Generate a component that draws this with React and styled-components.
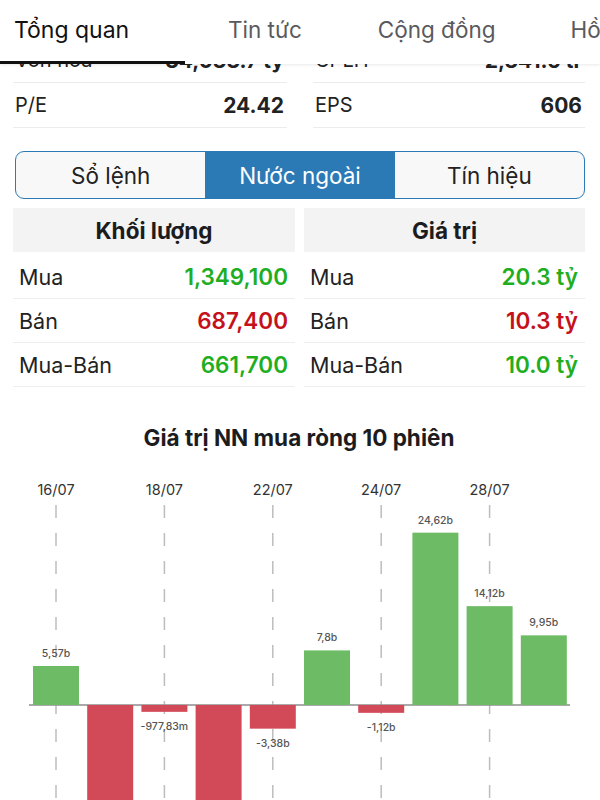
import React from "react";
import styled, { createGlobalStyle } from "styled-components";

const GlobalStyle = createGlobalStyle`
  html, body { margin: 0; padding: 0; background: #fff; overflow: hidden; }
  body { font-family: Inter, "Noto Sans", Roboto, sans-serif; color: #1c1c1e; }
  * { box-sizing: border-box; }
`;

const Page = styled.div`
  width: 600px;
  height: 800px;
  display: flex;
  flex-direction: column;
  overflow: hidden;
  background: #fff;
`;

const TabBar = styled.div`
  position: relative;
  z-index: 2;
  height: 64px;
  flex: none;
  display: flex;
  align-items: stretch;
  background: #fff;
  box-shadow: 0 1px 3px rgba(0, 0, 0, 0.09);
  white-space: nowrap;
  overflow: hidden;
`;

const Tab = styled.div`
  flex: none;
  display: flex;
  align-items: center;
  padding-bottom: 2px;
  margin-left: ${(p) => p.$offset || 0}px;
  width: ${(p) => (p.$width ? `${p.$width}px` : "auto")};
  padding-left: ${(p) => p.$pad || 0}px;
  font-size: ${(p) => (p.$active ? 23 : 22.5)}px;
  color: ${(p) => (p.$active ? "#111" : "#5a5a5e")};
  border-bottom: ${(p) => (p.$active ? "3px solid #111" : "3px solid transparent")};
`;

const Body = styled.div`
  flex: 1;
  overflow: hidden;
  padding: 0 15px 0 13px;
  display: flex;
  flex-direction: column;
  & > * { flex: none; }
`;

const InfoGrid = styled.div`
  display: grid;
  grid-template-columns: 274px 272px;
  column-gap: 26px;
  margin-top: ${(p) => p.$top || 0}px;
`;

const InfoRow = styled.div`
  height: 45px;
  display: flex;
  align-items: center;
  justify-content: space-between;
  border-bottom: 1px solid #ececec;
  padding: 0 3px 0 2px;
`;

const InfoLabel = styled.span`
  font-size: 20px;
  color: #222;
`;

const InfoValue = styled.span`
  font-size: 21px;
  font-weight: 700;
  color: #222;
`;

const Segmented = styled.div`
  margin: 23px 0 0 2px;
  height: 48px;
  display: grid;
  grid-template-columns: 1fr 1fr 1fr;
  border: 1.5px solid #2b7ab6;
  border-radius: 9px;
  overflow: hidden;
  background: #f8f8f9;
`;

const Segment = styled.div`
  display: flex;
  align-items: center;
  justify-content: center;
  font-size: 22.5px;
  color: ${(p) => (p.$active ? "#fff" : "#222")};
  background: ${(p) => (p.$active ? "#2b7ab6" : "transparent")};
`;

const Tables = styled.div`
  margin-top: 9px;
  display: grid;
  grid-template-columns: 282px 281px;
  column-gap: 9px;
`;

const Table = styled.div`
  display: flex;
  flex-direction: column;
`;

const TableHead = styled.div`
  height: 44px;
  margin-bottom: 3px;
  background: #f3f3f3;
  display: flex;
  align-items: center;
  justify-content: center;
  font-size: 22.5px;
  font-weight: 700;
  color: #1c1c1e;
`;

const TableRow = styled.div`
  height: 44px;
  display: flex;
  align-items: center;
  justify-content: space-between;
  border-bottom: 1px solid #eeeeee;
  padding: 0 7px 0 6px;
`;

const RowLabel = styled.span`
  font-size: 21.5px;
  color: #222;
`;

const RowValue = styled.span`
  font-size: 22.5px;
  font-weight: 600;
  color: ${(p) => (p.$tone === "down" ? "#c4111c" : "#1fae1f")};
`;

const ChartTitle = styled.div`
  margin-top: 38px;
  line-height: 26px;
  text-align: center;
  font-size: 22.5px;
  font-weight: 700;
  color: #1c1c1e;
`;

const ChartWrap = styled.div`
  margin: 19px -15px 0 -13px;
`;

const ChartSvg = styled.svg`
  display: block;
`;

const bars = [
  { v: 5.57, label: "5,57b", date: "16/07" },
  { v: -19.4, label: "-19,4b" },
  { v: -0.97783, label: "-977,83m", date: "18/07" },
  { v: -21.2, label: "-21,2b" },
  { v: -3.38, label: "-3,38b", date: "22/07" },
  { v: 7.8, label: "7,8b" },
  { v: -1.12, label: "-1,12b", date: "24/07" },
  { v: 24.62, label: "24,62b" },
  { v: 14.12, label: "14,12b", date: "28/07" },
  { v: 9.95, label: "9,95b" },
];

function NetChart() {
  const base = 235;
  const scale = 7;
  const step = 54.2;
  const first = 56;
  const bw = 46;
  return (
    <ChartSvg width="600" height="340" viewBox="0 0 600 340">
      {bars.map((b, i) =>
        b.date ? (
          <g key={`d${i}`}>
            <text
              x={first + i * step}
              y={25}
              textAnchor="middle"
              fontSize="14.5"
              fill="#333"
              fontFamily="Inter, sans-serif"
            >
              {b.date}
            </text>
            <line
              x1={first + i * step}
              x2={first + i * step}
              y1={35}
              y2={340}
              stroke="#bdbdbd"
              strokeWidth="1.5"
              strokeDasharray="13 15"
            />
          </g>
        ) : null
      )}
      <line x1="29" x2="570" y1={base} y2={base} stroke="#8e8e8e" strokeWidth="1.5" />
      {bars.map((b, i) => {
        const cx = first + i * step;
        const h = Math.abs(b.v) * scale;
        const pos = b.v >= 0;
        const y = pos ? base - h : base;
        return (
          <g key={`b${i}`}>
            <rect
              x={cx - bw / 2}
              y={y}
              width={bw}
              height={h}
              fill={pos ? "#6dbb64" : "#d24a58"}
            />
            <text
              x={cx}
              y={pos ? base - h - 9 : base + h + 18}
              textAnchor="middle"
              fontSize="10.5"
              fontWeight="500"
              fill="#555"
              fontFamily="Inter, sans-serif"
            >
              {b.label}
            </text>
          </g>
        );
      })}
    </ChartSvg>
  );
}

export default function App() {
  return (
    <Page>
      <GlobalStyle />
      <TabBar>
        <Tab $active $width={185} $pad={14}>Tổng quan</Tab>
        <Tab $offset={43}>Tin tức</Tab>
        <Tab $offset={76}>Cộng đồng</Tab>
        <Tab $offset={75}>Hồ sơ</Tab>
      </TabBar>
      <Body>
        <InfoGrid $top={-26}>
          <InfoRow>
            <InfoLabel>Vốn hóa</InfoLabel>
            <InfoValue>34,033.7 tỷ</InfoValue>
          </InfoRow>
          <InfoRow>
            <InfoLabel>CPLH</InfoLabel>
            <InfoValue>2,341.5 tr</InfoValue>
          </InfoRow>
          <InfoRow>
            <InfoLabel>P/E</InfoLabel>
            <InfoValue>24.42</InfoValue>
          </InfoRow>
          <InfoRow>
            <InfoLabel>EPS</InfoLabel>
            <InfoValue>606</InfoValue>
          </InfoRow>
        </InfoGrid>

        <Segmented>
          <Segment>Sổ lệnh</Segment>
          <Segment $active>Nước ngoài</Segment>
          <Segment>Tín hiệu</Segment>
        </Segmented>

        <Tables>
          <Table>
            <TableHead>Khối lượng</TableHead>
            <TableRow>
              <RowLabel>Mua</RowLabel>
              <RowValue>1,349,100</RowValue>
            </TableRow>
            <TableRow>
              <RowLabel>Bán</RowLabel>
              <RowValue $tone="down">687,400</RowValue>
            </TableRow>
            <TableRow>
              <RowLabel>Mua-Bán</RowLabel>
              <RowValue>661,700</RowValue>
            </TableRow>
          </Table>
          <Table>
            <TableHead>Giá trị</TableHead>
            <TableRow>
              <RowLabel>Mua</RowLabel>
              <RowValue>20.3 tỷ</RowValue>
            </TableRow>
            <TableRow>
              <RowLabel>Bán</RowLabel>
              <RowValue $tone="down">10.3 tỷ</RowValue>
            </TableRow>
            <TableRow>
              <RowLabel>Mua-Bán</RowLabel>
              <RowValue>10.0 tỷ</RowValue>
            </TableRow>
          </Table>
        </Tables>

        <ChartTitle>Giá trị NN mua ròng 10 phiên</ChartTitle>
        <ChartWrap>
          <NetChart />
        </ChartWrap>
      </Body>
    </Page>
  );
}
